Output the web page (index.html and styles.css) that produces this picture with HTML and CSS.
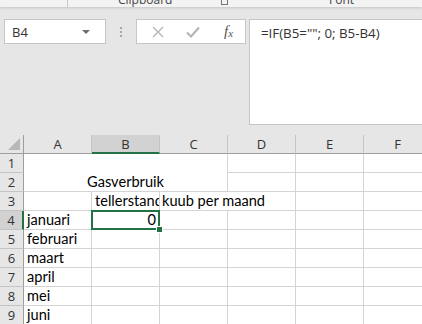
FILE: index.html
```html
<!DOCTYPE html>
<html lang="nl">
<head>
  <meta charset="UTF-8" />
  <title>Gasverbruik - Excel</title>
  <link rel="stylesheet" href="styles.css">
</head>
<body>
  <div class="ribbon">
    <span class="group-sep"></span>
    <span class="group-label clip">Clipboard</span>
    <span class="launcher"></span>
    <span class="group-label font">Font</span>
  </div>

  <div class="toolbar">
    <div class="namebox">
      <span>B4</span>
      <span class="caret"></span>
    </div>
    <div class="grip"><i></i><i></i><i></i></div>
    <div class="fxbox">
      <svg class="btn-x" width="12" height="12" viewBox="0 0 12 12"><path d="M1 1L11 11M11 1L1 11" stroke="#b3b3b3" stroke-width="1.3" fill="none"/></svg>
      <svg class="btn-ok" width="14" height="12" viewBox="0 0 14 12"><path d="M1 6.5L5 10.5L13 1.5" stroke="#b3b3b3" stroke-width="2" fill="none"/></svg>
      <span class="fx">f<sub>x</sub></span>
    </div>
    <div class="formula">=IF(B5=""; 0; B5-B4)</div>
  </div>

  <div class="sheet">
    <div class="hd corner"><span class="tri"></span></div>
    <div class="hd col">A</div>
    <div class="hd col sel">B</div>
    <div class="hd col">C</div>
    <div class="hd col">D</div>
    <div class="hd col">E</div>
    <div class="hd col">F</div>

    <div class="hd row">1</div>
    <div class="cell merged">Gasverbruik</div>
    <div class="cell"></div><div class="cell"></div><div class="cell"></div>

    <div class="hd row">2</div>
    <div class="cell"></div><div class="cell"></div><div class="cell"></div>

    <div class="hd row">3</div>
    <div class="cell"></div>
    <div class="cell clip-text">tellerstand</div>
    <div class="cell spill">kuub per maand</div>
    <div class="cell"></div><div class="cell"></div><div class="cell"></div>

    <div class="hd row sel">4</div>
    <div class="cell">januari</div>
    <div class="cell num active">0<span class="handle"></span></div>
    <div class="cell"></div><div class="cell"></div><div class="cell"></div><div class="cell"></div>

    <div class="hd row">5</div>
    <div class="cell">februari</div>
    <div class="cell"></div><div class="cell"></div><div class="cell"></div><div class="cell"></div><div class="cell"></div>

    <div class="hd row">6</div>
    <div class="cell">maart</div>
    <div class="cell"></div><div class="cell"></div><div class="cell"></div><div class="cell"></div><div class="cell"></div>

    <div class="hd row">7</div>
    <div class="cell">april</div>
    <div class="cell"></div><div class="cell"></div><div class="cell"></div><div class="cell"></div><div class="cell"></div>

    <div class="hd row">8</div>
    <div class="cell">mei</div>
    <div class="cell"></div><div class="cell"></div><div class="cell"></div><div class="cell"></div><div class="cell"></div>

    <div class="hd row">9</div>
    <div class="cell">juni</div>
    <div class="cell"></div><div class="cell"></div><div class="cell"></div><div class="cell"></div><div class="cell"></div>
  </div>
</body>
</html>
```

FILE: styles.css
```css
body {
  margin: 0;
  width: 422px;
  height: 324px;
  overflow: hidden;
  background: #ffffff;
  font-family: 'Open Sans', 'Noto Sans', sans-serif;
  color: #222;
}

/* ribbon, only the bottom edge is in view */
.ribbon {
  height: 7px;
  background: #f3f3f3;
  position: relative;
  overflow: hidden;
  box-shadow: 0 1px 3px rgba(0,0,0,0.15);
  z-index: 1;
}

.group-sep {
  position: absolute;
  left: 67px;
  top: 0;
  width: 1px;
  height: 7px;
  background: #c8c8c8;
}

.group-label {
  position: absolute;
  top: -8px;
  font-size: 12px;
  line-height: 16px;
  color: #444;
}
.group-label.clip { left: 118px; }
.group-label.font { left: 329px; }

.launcher {
  position: absolute;
  left: 221px;
  top: 0;
  width: 5px;
  height: 4px;
  border: 1px solid #777;
  border-top: none;
}

.toolbar {
  height: 128px;
  background: #e6e6e6;
  display: flex;
  align-items: flex-start;
  padding-top: 12px;
  box-sizing: border-box;
}

.namebox {
  margin-left: 4px;
  width: 102px;
  height: 25px;
  box-sizing: border-box;
  background: #fff;
  border: 1px solid #c6c6c6;
  display: flex;
  align-items: center;
  justify-content: space-between;
  padding: 0 15px 0 7px;
  font-size: 13px;
  color: #333;
}

.caret {
  width: 0;
  height: 0;
  border-left: 4px solid transparent;
  border-right: 4px solid transparent;
  border-top: 4px solid #6d6d6d;
}

.grip {
  width: 30px;
  height: 25px;
  display: flex;
  flex-direction: column;
  align-items: center;
  justify-content: center;
  gap: 2px;
}
.grip i {
  width: 2px;
  height: 2px;
  background: #a6a6a6;
}

.fxbox {
  width: 110px;
  height: 25px;
  box-sizing: border-box;
  background: #fff;
  border: 1px solid #c6c6c6;
  display: flex;
  align-items: center;
  padding-left: 15px;
}
.btn-x { margin-right: 22px; }
.btn-ok { margin-right: 24px; }

.fx {
  font-family: 'Liberation Serif', serif;
  font-style: italic;
  font-size: 15px;
  color: #555;
  line-height: 1;
}
.fx sub {
  font-size: 11px;
  vertical-align: -1px;
}

.formula {
  margin-left: 3px;
  flex: 1;
  height: 106px;
  box-sizing: border-box;
  background: #fff;
  border: 1px solid #c6c6c6;
  border-right: none;
  padding: 4px 0 0 11px;
  font-size: 13.3px;
  color: #333;
}

.sheet {
  display: grid;
  grid-template-columns: 24px repeat(6, 68px);
  grid-auto-rows: 19px;
  background: #fff;
  font-family: 'Lato', 'Liberation Sans', sans-serif;
  font-size: 14.6px;
}

.hd {
  background: #e6e6e6;
  box-sizing: border-box;
  display: flex;
  align-items: center;
  justify-content: center;
  font-family: 'Open Sans', sans-serif;
  font-size: 13px;
  color: #333;
}
.hd.col {
  border-right: 1px solid #c4c4c4;
  border-bottom: 1px solid #9e9e9e;
}
.hd.row {
  border-right: 1px solid #9e9e9e;
  border-bottom: 1px solid #c4c4c4;
}
.hd.col.sel {
  background: #d2d2d2;
  border-bottom: 2px solid #217346;
}
.hd.row.sel {
  background: #d2d2d2;
  border-right: 2px solid #217346;
}

.corner {
  position: relative;
  border-right: 1px solid #9e9e9e;
  border-bottom: 1px solid #9e9e9e;
}
.tri {
  position: absolute;
  right: 3px;
  bottom: 3px;
  width: 0;
  height: 0;
  border-left: 12px solid transparent;
  border-bottom: 12px solid #b8b8b8;
}

.cell {
  background: #fff;
  box-sizing: border-box;
  border-right: 1px solid #d4d4d4;
  border-bottom: 1px solid #d4d4d4;
  padding: 0 3px;
  line-height: 18px;
  white-space: nowrap;
  color: #000;
  position: relative;
}

.merged {
  grid-column: 2 / 5;
  grid-row: 2 / 4;
  display: flex;
  align-items: flex-end;
  justify-content: center;
}

.clip-text { overflow: hidden; }

.spill {
  border-right: none;
  z-index: 1;
  background: transparent;
  padding-left: 2px;
}

.num { text-align: right; }

.active {
  overflow: visible;
}
.active::before {
  content: "";
  position: absolute;
  left: -1px;
  top: -1px;
  right: -1px;
  bottom: -1px;
  border: 2px solid #217346;
}
.handle {
  position: absolute;
  right: -4px;
  bottom: -4px;
  width: 5px;
  height: 5px;
  background: #217346;
  border: 1px solid #fff;
  z-index: 2;
}
```
